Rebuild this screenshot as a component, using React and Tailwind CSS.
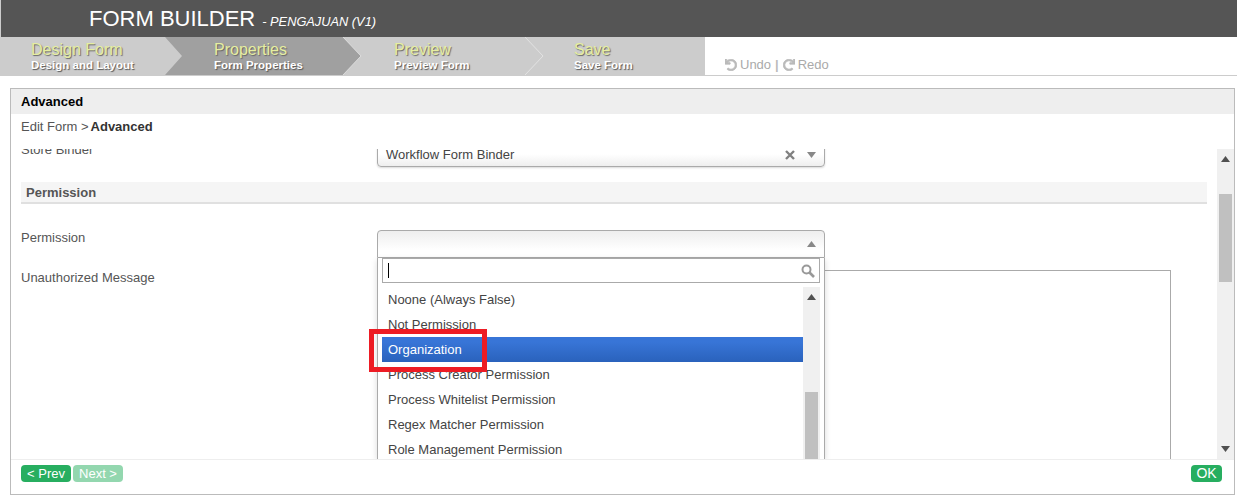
import React from 'react';
import { FaUndo, FaRedo } from 'react-icons/fa';

const arial = "font-['Liberation_Sans',Arial,sans-serif]";

function Step({ title, sub, className = '', children }) {
  return (
    <div className={`relative h-full shrink-0 ${className}`}>
      {children}
      <div className="relative pt-[3px]">
        <div className="text-[16px] leading-[19px] text-[#e6eea0] [text-shadow:1px_1px_1px_#666]">{title}</div>
        <div className="text-[11.5px] leading-[12px] font-bold text-white [text-shadow:1px_1px_1px_#555]">{sub}</div>
      </div>
    </div>
  );
}

function Up({ className = '' }) {
  return <svg width="9" height="6" viewBox="0 0 9 6" className={className}><path d="M4.5 0 L9 6 H0 Z" fill="currentColor" /></svg>;
}
function Down({ className = '' }) {
  return <svg width="9" height="6" viewBox="0 0 9 6" className={className}><path d="M0 0 H9 L4.5 6 Z" fill="currentColor" /></svg>;
}

function Scrollbar({ thumb, full = true }) {
  return (
    <div className="w-[17px] shrink-0 bg-[#f0f0f0] relative flex flex-col items-center">
      <Up className="mt-[7px] text-[#505050]" />
      {thumb}
      {full && <Down className="mt-auto mb-[7px] text-[#505050]" />}
    </div>
  );
}

const items = [
  'Noone (Always False)',
  'Not Permission',
  'Organization',
  'Process Creator Permission',
  'Process Whitelist Permission',
  'Regex Matcher Permission',
  'Role Management Permission',
];

export default function App() {
  return (
    <div className={`${arial} w-[1237px] h-[497px] bg-white overflow-hidden text-[12px] text-[#555]`}>
      <div className="h-[37px] bg-[#555555] border-l border-[#ccc] pl-[88px] flex items-baseline pt-[5px] text-white">
        <span className="text-[22px] leading-[27px]">FORM BUILDER</span>
        <span className="ml-[7px] text-[12.8px] italic">- PENGAJUAN (V1)</span>
      </div>

      <div className="h-[39px] flex border-b border-[#ccc]">
        <div className="w-[705px] h-[38px] bg-[#cccccc] flex relative overflow-hidden">
          <Step title="Design Form" sub="Design and Layout" className="w-[165px] pl-[31px]" />
          <Step title="Properties" sub="Form Properties" className="w-[180px] pl-[49px]">
            <svg width="197" height="38" className="absolute left-0 top-0">
              <path d="M0 0 H178 L196 19 L178 38 H0 L17 19 Z" fill="#a0a0a0" />
              <path d="M178 0 L196 19 L178 38" fill="none" stroke="#dcdcdc" strokeWidth="1" />
            </svg>
          </Step>
          <Step title="Preview" sub="Preview Form" className="w-[180px] pl-[49px]" />
          <Step title="Save" sub="Save Form" className="w-[180px] pl-[49px]">
            <svg width="22" height="38" className="absolute left-0 top-0">
              <path d="M0 0 L18 19 L0 38" fill="none" stroke="#e2e2e2" strokeWidth="1" />
            </svg>
          </Step>
        </div>
        <div className="flex items-center gap-[3px] pl-[20px] pt-[18px] h-[38px] text-[13px] font-bold text-[#bbbbbb]">
          <FaUndo className="text-[12px]" stroke="currentColor" strokeWidth={30} />
          <span className="font-normal text-[#aaaaaa]">Undo</span>
          <span className="mx-px">|</span>
          <FaRedo className="text-[12px]" stroke="currentColor" strokeWidth={30} />
          <span className="font-normal text-[#aaaaaa]">Redo</span>
        </div>
      </div>

      <div className="ml-[10px] mt-[12px] w-[1225px] h-[407px] border border-[#bbbbbb] flex flex-col">
        <div className="h-[25px] shrink-0 bg-[#eeeeee] pl-[10px] flex items-center text-[13px] font-bold text-black">Advanced</div>
        <div className="h-[35px] shrink-0 pl-[10px] pt-[5px] text-[13px] leading-[16px]">
          Edit Form &gt;<b className="ml-[2px] text-[#333]">Advanced</b>
        </div>

        <div className="h-[310px] shrink-0 flex overflow-hidden">
          <div className="flex-1 relative overflow-hidden">
            <div className="pl-[10px] pr-[10px] text-[13px]">
              <div className="-mt-[10px] h-[28px] flex">
                <div className="w-[356px] pt-[3px] leading-[16px]">Store Binder</div>
                <div className="w-[448px] h-[28px] rounded-[4px] border border-[#aaaaaa] bg-gradient-to-b from-white from-[55%] to-[#eeeeee] shadow-[0_1px_2px_rgba(0,0,0,0.15)] flex items-center pl-[8px] pr-[8px] pt-[4px] text-[#444]">
                  <span className="leading-[16px] flex-1">Workflow Form Binder</span>
                  <svg width="10" height="10" viewBox="0 0 10 10" className="mr-[12px]" stroke="#808080" strokeWidth="2.4"><path d="M1 1 L9 9 M9 1 L1 9" /></svg>
                  <Down className="text-[#888]" />
                </div>
              </div>

              <div className="mt-[15px] h-[22px] bg-[#f5f5f5] border-b-2 border-[#e0e0e0] pl-[5px] pt-[1px] flex items-center font-bold leading-[16px]">Permission</div>

              <div className="mt-[26px] h-[28px] flex">
                <div className="w-[356px] leading-[16px]">Permission</div>
                <div className="w-[448px] h-[28px] rounded-t-[4px] border border-[#aaaaaa] bg-gradient-to-b from-[#eeeeee] to-white to-[75%] flex items-center justify-end pr-[8px]">
                  <Up className="text-[#888]" />
                </div>
              </div>

              <div className="mt-[12px] flex">
                <div className="w-[356px] leading-[16px]">Unauthorized Message</div>
                <div className="w-[794px] h-[300px] border border-[#aaaaaa] bg-white" />
              </div>
            </div>

            <div className="absolute left-[366px] top-[109px] bottom-0 w-[448px] bg-white border-x border-[#aaaaaa] shadow-[0_2px_6px_rgba(0,0,0,0.15)] px-[4px] text-[13px] flex flex-col">
              <div className="h-[25px] shrink-0 border border-[#aaaaaa] flex items-center pl-[5px] pr-[4px] justify-between">
                <div className="w-px h-[15px] bg-black" />
                <svg width="14" height="14" viewBox="0 0 14 14" fill="none" stroke="#999" strokeWidth="2">
                  <circle cx="5.5" cy="5.5" r="4" />
                  <path d="M8.5 8.5 L13 13" strokeWidth="2.6" />
                </svg>
              </div>
              <div className="mt-[4px] flex-1 flex min-h-0">
                <div className="flex-1">
                  {items.map((t, i) => (
                    <div key={t} className={`h-[25px] pl-[6px] flex items-center leading-[16px] ${i === 2 ? 'bg-gradient-to-b from-[#3875d7] from-[20%] to-[#2a62bc] text-white' : 'text-[#444]'}`}>{t}</div>
                  ))}
                </div>
                <Scrollbar full={false} thumb={<div className="w-[13px] h-[67px] bg-[#c0c0c0] absolute left-[2px] bottom-0" />} />
              </div>
              <div className="absolute left-[-9px] top-[71px] w-[118px] h-[43px] border-[5px] border-[#ed1c24]" />
            </div>
          </div>
          <Scrollbar thumb={<div className="w-[13px] h-[88px] bg-[#c0c0c0] absolute left-[2px] top-[45px]" />} />
        </div>

        <div className="flex-1 border-t border-[#eeeeee] pt-[5px] pl-[10px] pr-[12px] flex items-start">
          <div className="w-[50px] h-[17px] rounded-[4px] bg-[#27ae60] text-white text-[13px] leading-[17px] text-center">&lt; Prev</div>
          <div className="ml-[2px] w-[50px] h-[17px] rounded-[4px] bg-[#93d7af] text-white text-[13px] leading-[17px] text-center">Next &gt;</div>
          <div className="ml-auto w-[31px] h-[17px] rounded-[4px] bg-[#27ae60] text-white text-[14px] leading-[17px] text-center">OK</div>
        </div>
      </div>
    </div>
  );
}
